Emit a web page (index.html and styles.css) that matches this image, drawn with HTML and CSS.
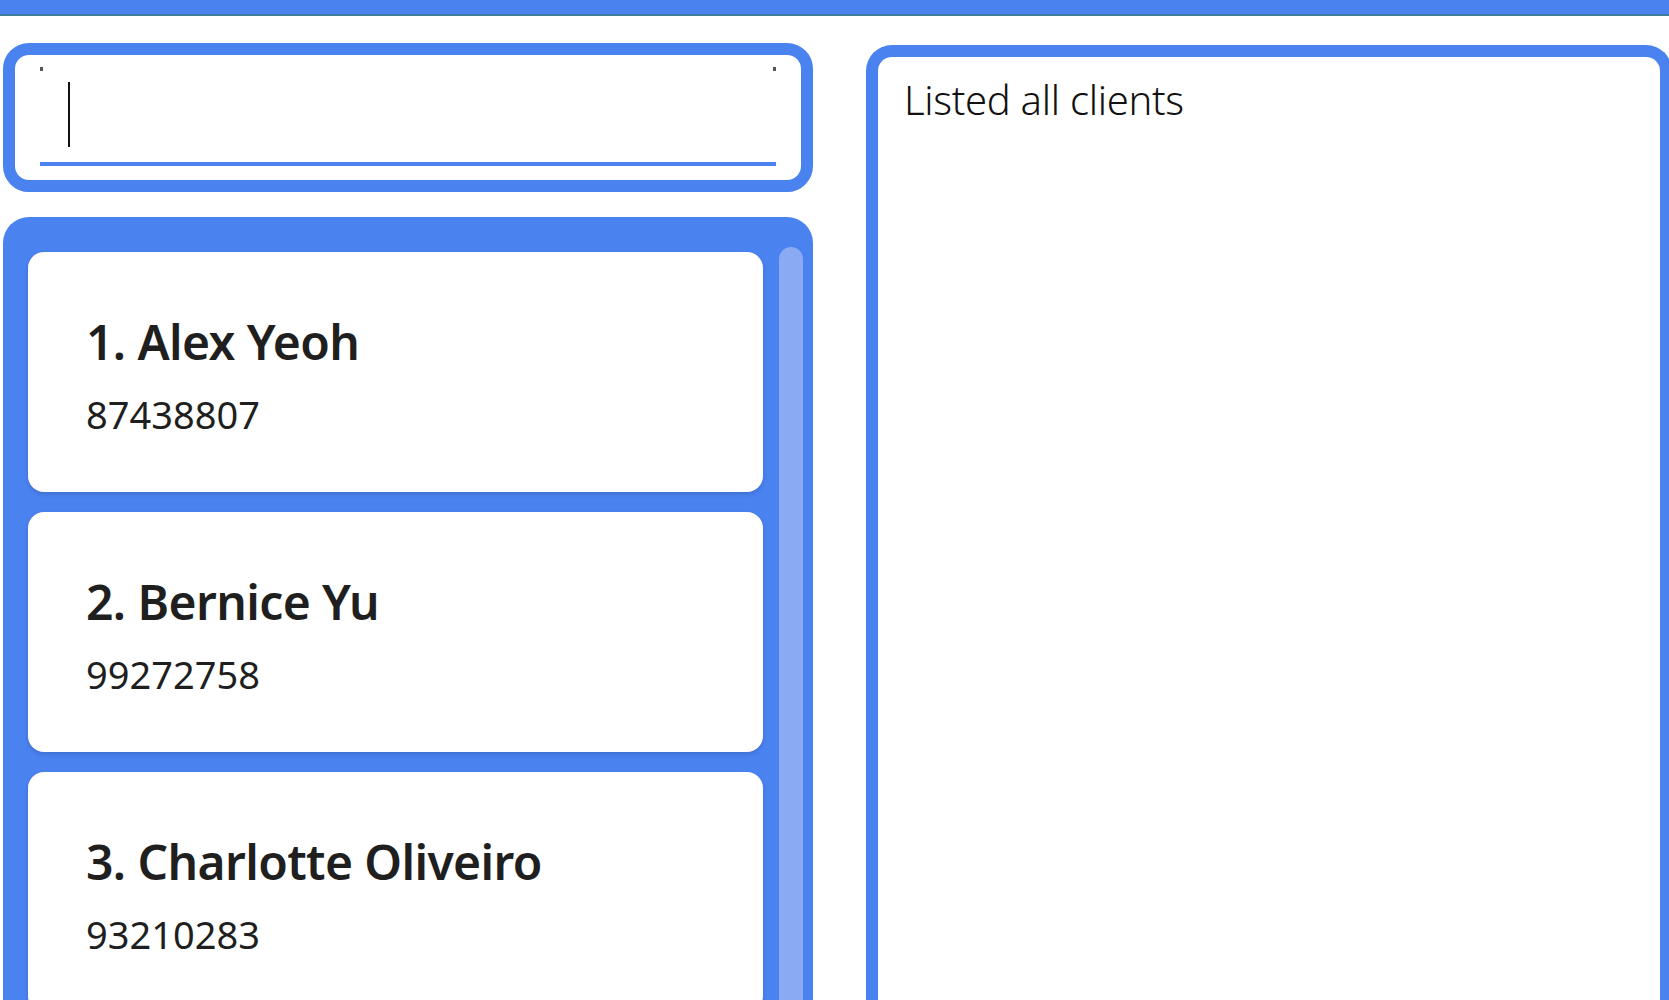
FILE: index.html
```html
<!DOCTYPE html>
<html>
<head>
<meta charset="utf-8">
<link rel="stylesheet" href="styles.css">
</head>
<body>
<div class="topbar"></div>
<div class="main">
  <div class="left">
    <div class="command">
      <div class="field"><span class="caret"></span></div>
    </div>
    <div class="list">
      <div class="cards">
        <div class="card"><div class="name">1. Alex Yeoh</div><div class="phone">87438807</div></div>
        <div class="card"><div class="name">2. Bernice Yu</div><div class="phone">99272758</div></div>
        <div class="card"><div class="name">3. Charlotte Oliveiro</div><div class="phone">93210283</div></div>
      </div>
      <div class="scrollbar"></div>
    </div>
  </div>
  <div class="right">
    <p class="result">Listed all clients</p>
  </div>
</div>
</body>
</html>
```

FILE: styles.css
```css
html, body {
  margin: 0;
  padding: 0;
  background: #ffffff;
  overflow: hidden;
  height: 1000px;
  font-family: "Noto Sans", "Open Sans", "Liberation Sans", sans-serif;
  color: #1f1f1f;
}
.topbar {
  height: 14px;
  background: #4a82f0;
  border-bottom: 2px solid #3d7d98;
}
.main {
  display: flex;
  padding-left: 3px;
  gap: 53px;
  width: 1700px;
}
.left {
  width: 810px;
  flex: none;
  display: flex;
  flex-direction: column;
}
.command {
  margin-top: 27px;
  height: 149px;
  box-sizing: border-box;
  border: 12px solid #4a82f0;
  border-radius: 26px;
  padding: 12px 25px 0 25px;
  background: #fff;
}
.field {
  position: relative;
  height: 99px;
  box-sizing: border-box;
  border-bottom: 4px solid #4a82f0;
}
.field::before, .field::after {
  content: "";
  position: absolute;
  top: 0;
  width: 3px;
  height: 4px;
  background: #555;
}
.field::before { left: 0; }
.field::after { right: 0; }
.caret {
  position: absolute;
  left: 28px;
  top: 15px;
  width: 2px;
  height: 65px;
  background: #111;
}
.list {
  margin-top: 25px;
  height: 800px;
  background: #4a82f0;
  border-radius: 26px 26px 0 0;
  padding: 35px 0 0 25px;
  display: flex;
  box-sizing: border-box;
}
.cards {
  width: 735px;
  display: flex;
  flex-direction: column;
  gap: 20px;
}
.card {
  height: 240px;
  flex: none;
  box-sizing: border-box;
  background: #fff;
  border-radius: 16px;
  padding: 61px 58px 0 58px;
  box-shadow: 0 2px 4px rgba(0, 0, 0, 0.15);
}
.name {
  font-size: 48px;
  line-height: 58px;
  font-weight: 600;
  letter-spacing: -0.6px;
  color: #1f1f1f;
}
.phone {
  margin-top: 20px;
  font-size: 38px;
  line-height: 46px;
  font-weight: 400;
  color: #1f1f1f;
}
.scrollbar {
  margin-left: 16px;
  margin-top: -5px;
  width: 24px;
  background: #8aabf4;
  border-radius: 12px 12px 0 0;
}
.right {
  margin-top: 29px;
  width: 806px;
  height: 1000px;
  flex: none;
  box-sizing: border-box;
  border: 12px solid #4a82f0;
  border-bottom: none;
  border-radius: 26px 26px 0 0;
  padding: 19px 26px;
}
.result {
  margin: 0;
  font-size: 40px;
  line-height: 48px;
  font-weight: 300;
  letter-spacing: -0.3px;
  color: #111;
}
```
